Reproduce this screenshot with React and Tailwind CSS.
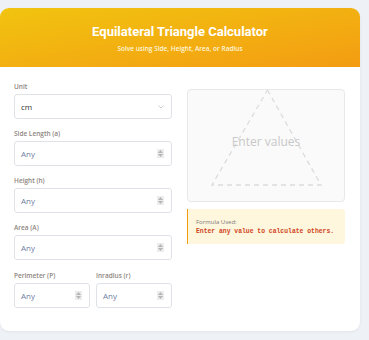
import React from "react";

function Spinner() {
  return (
    <span className="flex h-[9px] w-[7px] flex-col items-center justify-center gap-[1px] bg-[#ececec]">
      <svg width="5" height="3" viewBox="0 0 5 3"><path d="M0 3 L2.5 0 L5 3Z" fill="#b5b5b5" /></svg>
      <svg width="5" height="3" viewBox="0 0 5 3"><path d="M0 0 L2.5 3 L5 0Z" fill="#b5b5b5" /></svg>
    </span>
  );
}

function NumField({ label }) {
  return (
    <div className="flex flex-col">
      <div className="mb-[2px] h-[10px] text-[6.5px] font-semibold leading-[10px] text-[#8d857e]">{label}</div>
      <div className="flex h-[25px] items-center justify-between rounded-[3px] border border-[#dfe3e8] bg-white pl-[6px] pr-[7px]">
        <span className="text-[8px] text-[#6f7ea3]">Any</span>
        <Spinner />
      </div>
    </div>
  );
}

export default function App() {
  return (
    <div className="min-h-[340px] w-[369px] bg-[#eef2f6] pt-[8px]" style={{ fontFamily: "'Open Sans', 'Noto Sans', sans-serif" }}>
      <div className="w-[360px] overflow-hidden rounded-[9px] bg-white shadow-[0_1px_3px_rgba(0,0,0,0.06)]">
        <div className="flex h-[59px] flex-col items-center justify-center bg-gradient-to-br from-[#f1c40f] to-[#f39c12]">
          <div className="text-[13px] font-bold leading-[18px] text-white" style={{ fontFamily: "Roboto, sans-serif" }}>
            Equilateral Triangle Calculator
          </div>
          <div className="mt-[3px] text-[6.5px] font-semibold leading-[9px] text-[#fff6dc]">Solve using Side, Height, Area, or Radius</div>
        </div>
        <div className="flex gap-[15px] pb-[23px] pl-[14px] pr-[15px] pt-[15px]">
          <div className="flex w-[158px] flex-col gap-[10px]">
            <div className="flex flex-col">
              <div className="mb-[2px] h-[10px] text-[6.5px] font-semibold leading-[10px] text-[#8d857e]">Unit</div>
              <div className="flex h-[25px] items-center justify-between rounded-[3px] border border-[#dfe3e8] bg-white pl-[6px] pr-[7px]">
                <span className="text-[8px] text-[#333]">cm</span>
                <svg width="6" height="4" viewBox="0 0 6 4"><path d="M0.5 0.5 L3 3 L5.5 0.5" fill="none" stroke="#bbb" strokeWidth="0.7" /></svg>
              </div>
            </div>
            <NumField label="Side Length (a)" />
            <NumField label="Height (h)" />
            <NumField label="Area (A)" />
            <div className="mt-[1px] flex gap-[6px]">
              <div className="w-[76px]"><NumField label="Perimeter (P)" /></div>
              <div className="w-[76px]"><NumField label="Inradius (r)" /></div>
            </div>
          </div>
          <div className="flex w-[158px] flex-col pt-[7px]">
            <div className="relative flex h-[113px] items-center justify-center rounded-[4px] border border-[#e8e8e8] bg-[#fafafa] pb-[8px]">
              <svg className="absolute left-0 top-0" width="158" height="113" viewBox="0 0 158 113">
                <path d="M79.5 0 L133 95 L24 95 Z" fill="none" stroke="#dcdcdc" strokeWidth="1.3" strokeDasharray="5 4" />
              </svg>
              <span className="relative text-[12px] text-[#c8c8c8]">Enter values</span>
            </div>
            <div className="mt-[7px] flex h-[35px] flex-col justify-center rounded-r-[3px] border-l border-[#f39c12] bg-[#fef6dd] pl-[8px]">
              <div className="text-[6px] leading-[8px] text-[#7a7a7a]">Formula Used:</div>
              <div className="mt-[2px] text-[6.4px] font-bold leading-[8px] text-[#d0451b]" style={{ fontFamily: "'Liberation Mono', monospace" }}>
                Enter any value to calculate others.
              </div>
            </div>
          </div>
        </div>
      </div>
    </div>
  );
}
